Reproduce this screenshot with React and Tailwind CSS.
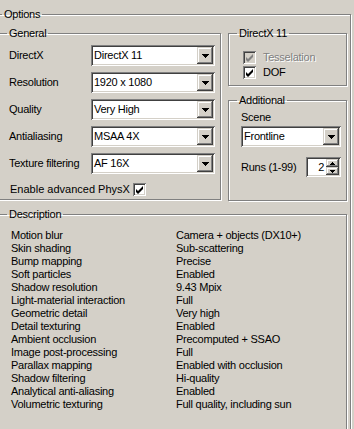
import React from "react";

const sunken =
  "shadow-[inset_1px_1px_0_#808080,inset_-1px_-1px_0_#fff,inset_2px_2px_0_#404040,inset_-2px_-2px_0_#d4d0c8]";
const raised =
  "shadow-[inset_-1px_-1px_0_#404040,inset_1px_1px_0_#d4d0c8,inset_-2px_-2px_0_#808080,inset_2px_2px_0_#fff]";
const etched =
  "border border-[#808080] shadow-[inset_1px_1px_0_#fff,1px_1px_0_#fff]";

const DownArrow = () => (
  <svg width="7" height="4" viewBox="0 0 7 4" className="block" shapeRendering="crispEdges">
    <rect x="0" y="0" width="7" height="1" fill="#000" />
    <rect x="1" y="1" width="5" height="1" fill="#000" />
    <rect x="2" y="2" width="3" height="1" fill="#000" />
    <rect x="3" y="3" width="1" height="1" fill="#000" />
  </svg>
);

const SmallArrow = ({ up }) => (
  <svg width="5" height="3" viewBox="0 0 5 3" className="block" shapeRendering="crispEdges">
    <rect x="0" y={up ? 2 : 0} width="5" height="1" fill="#000" />
    <rect x="1" y="1" width="3" height="1" fill="#000" />
    <rect x="2" y={up ? 0 : 2} width="1" height="1" fill="#000" />
  </svg>
);

const Combo = ({ value, className }) => (
  <div className={`flex h-[21px] bg-white p-[2px] ${sunken} ${className}`}>
    <div className="flex flex-1 items-center pl-[1px] whitespace-nowrap overflow-hidden">{value}</div>
    <div className={`flex w-[16px] items-center justify-center bg-[#d4d0c8] ${raised}`}>
      <DownArrow />
    </div>
  </div>
);

const Check = ({ disabled }) => (
  <div className={`h-[13px] w-[13px] shrink-0 ${sunken} ${disabled ? "bg-[#d4d0c8]" : "bg-white"}`}>
    <svg width="13" height="13" viewBox="0 0 13 13" className="block">
      <polygon points="3,6 5,8 10,3 10,6 5,11 3,9" fill={disabled ? "#808080" : "#000"} />
    </svg>
  </div>
);

const Group = ({ title, className, children }) => (
  <fieldset className={`${etched} ${className}`}>
    <legend className="ml-[8px] px-[2px] leading-[13px]">{title}</legend>
    {children}
  </fieldset>
);

const general = [
  ["DirectX", "DirectX 11"],
  ["Resolution", "1920 x 1080"],
  ["Quality", "Very High"],
  ["Antialiasing", "MSAA 4X"],
  ["Texture filtering", "AF 16X"],
];

const description = [
  ["Motion blur", "Camera + objects (DX10+)"],
  ["Skin shading", "Sub-scattering"],
  ["Bump mapping", "Precise"],
  ["Soft particles", "Enabled"],
  ["Shadow resolution", "9.43 Mpix"],
  ["Light-material interaction", "Full"],
  ["Geometric detail", "Very high"],
  ["Detail texturing", "Enabled"],
  ["Ambient occlusion", "Precomputed + SSAO"],
  ["Image post-processing", "Full"],
  ["Parallax mapping", "Enabled with occlusion"],
  ["Shadow filtering", "Hi-quality"],
  ["Analytical anti-aliasing", "Enabled"],
  ["Volumetric texturing", "Full quality, including sun"],
];

export default function App() {
  return (
    <div className="h-[429px] w-[354px] overflow-hidden bg-[#d4d0c8] pt-[8px] text-[11px] leading-[13px] tracking-[-0.25px] text-black [font-family:'Liberation_Sans',Arial,sans-serif]">
      <fieldset className={`ml-[-6px] h-[440px] w-[357px] ${etched}`}>
        <legend className="ml-[7px] px-[2px] leading-[13px]">Options</legend>
        <div className="px-[3px] pt-[6px]">
          <div className="flex gap-[7px]">
            <Group title="General" className="h-[173px] w-[223px]">
              <div className="flex flex-col gap-[6px] pl-[10px] pr-[5px] pt-[5px]">
                {general.map(([label, value]) => (
                  <div key={label} className="flex h-[21px] items-center">
                    <span className="flex-1">{label}</span>
                    <Combo value={value} className="w-[124px]" />
                  </div>
                ))}
              </div>
              <div className="mt-[9px] flex items-center gap-[3px] pl-[11px]">
                <span className="tracking-normal">Enable advanced PhysX</span>
                <Check />
              </div>
            </Group>
            <div className="flex w-[119px] flex-col gap-[8px]">
              <Group title="DirectX 11" className="h-[59px]">
                <div className="flex flex-col gap-[2px] pl-[14px] pt-[11px]">
                  <div className="flex items-center gap-[7px]">
                    <Check disabled />
                    <span className="text-[#808080] [text-shadow:1px_1px_0_#fff]">Tesselation</span>
                  </div>
                  <div className="flex items-center gap-[7px]">
                    <Check />
                    <span>DOF</span>
                  </div>
                </div>
              </Group>
              <Group title="Additional" className="h-[107px]">
                <div className="pl-[12px] pr-[5px] pt-[4px]">
                  <div>Scene</div>
                  <Combo value="Frontline" className="mt-[2px] w-[100px]" />
                  <div className="mt-[10px] flex items-center justify-between">
                    <span>Runs (1-99)</span>
                    <div className={`flex h-[20px] w-[35px] bg-white p-[2px] ${sunken}`}>
                      <div className="flex flex-1 items-center justify-end pr-[2px]">2</div>
                      <div className="flex w-[13px] flex-col">
                        <div className={`flex flex-1 items-center justify-center bg-[#d4d0c8] ${raised}`}>
                          <SmallArrow up />
                        </div>
                        <div className={`flex flex-1 items-center justify-center bg-[#d4d0c8] ${raised}`}>
                          <SmallArrow />
                        </div>
                      </div>
                    </div>
                  </div>
                </div>
              </Group>
            </div>
          </div>
          <Group title="Description" className="mt-[7px] h-[240px] w-[349px]">
            <div className="grid grid-cols-[165px_1fr] pl-[12px] pt-[8px]">
              {description.map(([label, value]) => (
                <React.Fragment key={label}>
                  <span className="whitespace-nowrap">{label}</span>
                  <span className="whitespace-nowrap">{value}</span>
                </React.Fragment>
              ))}
            </div>
          </Group>
        </div>
      </fieldset>
    </div>
  );
}
